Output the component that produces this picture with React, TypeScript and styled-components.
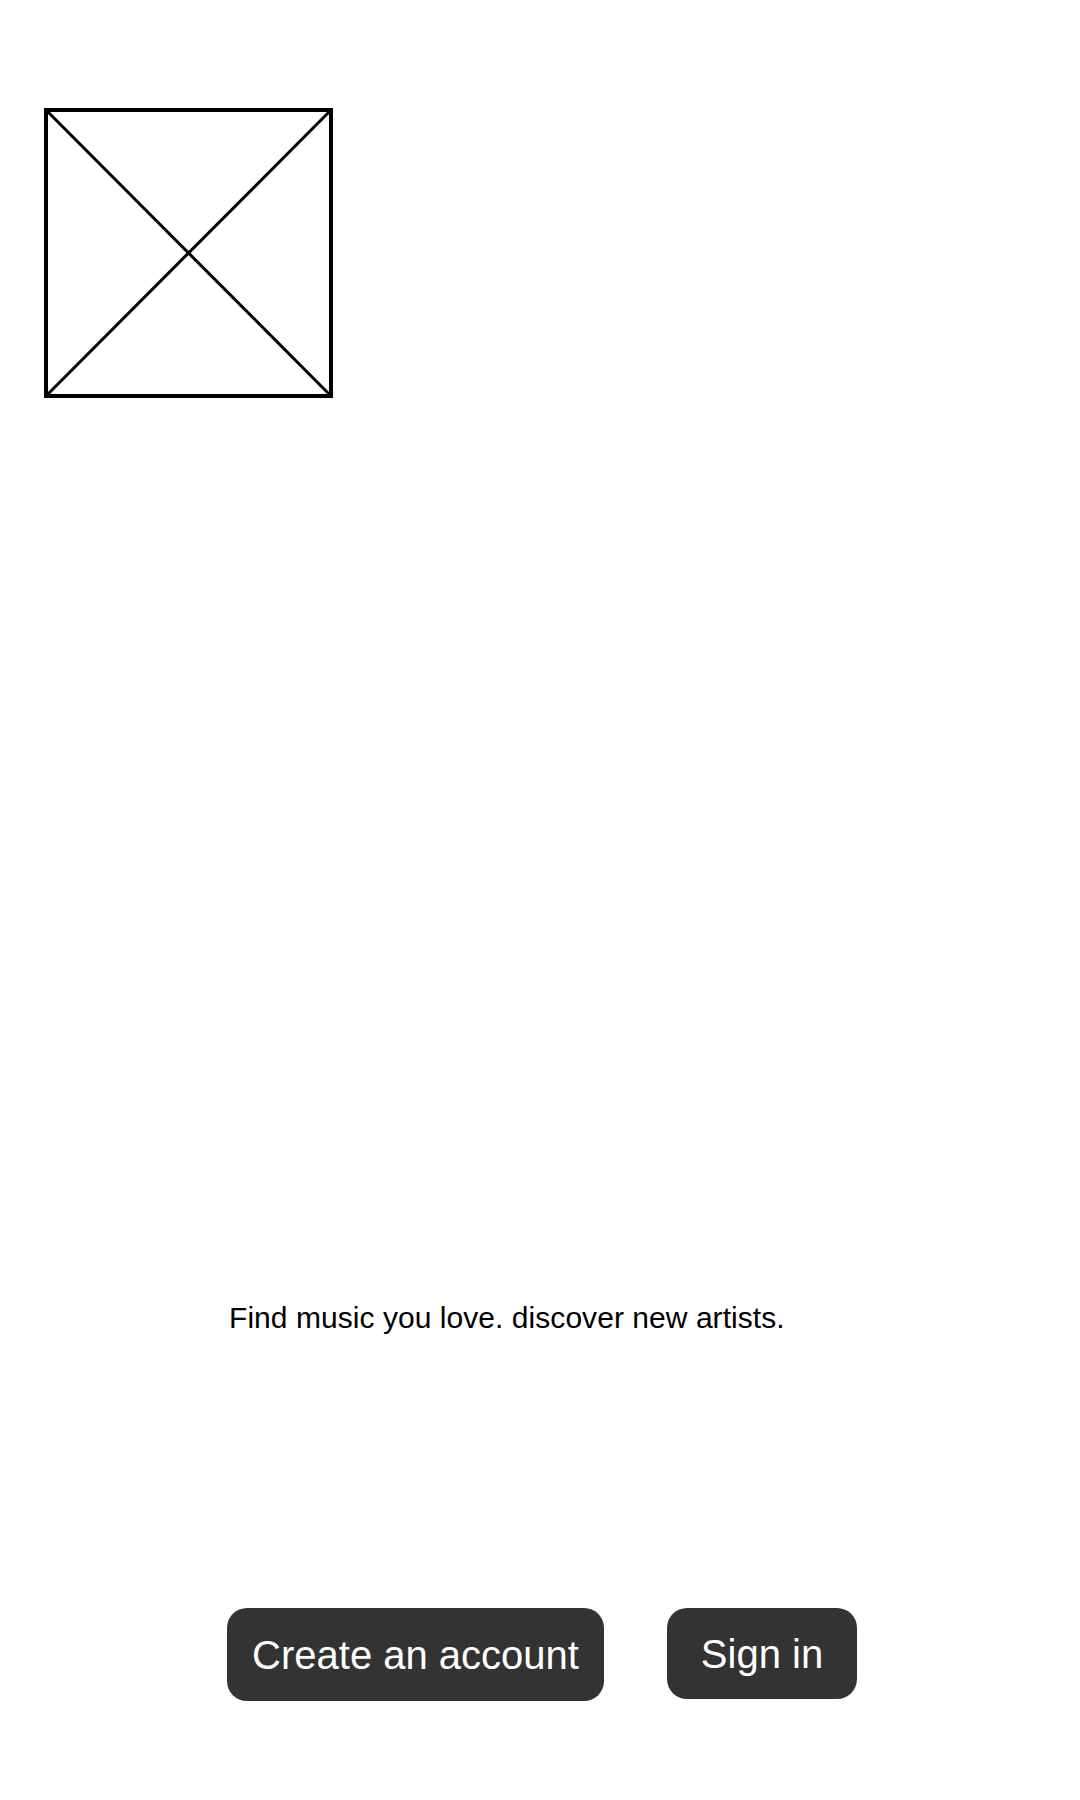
import React from "react";
import styled, { createGlobalStyle } from "styled-components";

const GlobalStyle = createGlobalStyle`
  html, body {
    margin: 0;
    padding: 0;
    background: #ffffff;
  }
  body {
    font-family: "Liberation Sans", Arial, sans-serif;
    color: #000000;
  }
`;

const Page = styled.main`
  display: flex;
  flex-direction: column;
  min-height: 1800px;
  box-sizing: border-box;
  padding-top: 108px;
`;

const LogoSlot = styled.div`
  padding-left: 44px;
  display: flex;
`;

const Content = styled.section`
  display: flex;
  flex-direction: column;
  padding-left: 227px;
  margin-top: 903px;
`;

const Tagline = styled.p`
  margin: 0 0 0 2px;
  font-size: 30px;
  line-height: 34px;
  letter-spacing: 0.05px;
  color: #000;
`;

const Actions = styled.div`
  display: flex;
  align-items: flex-start;
  gap: 63px;
  margin-top: 273px;
`;

const ActionButton = styled.button<{ $w: number; $h: number }>`
  display: flex;
  align-items: center;
  justify-content: center;
  width: ${(p) => p.$w}px;
  height: ${(p) => p.$h}px;
  padding: 0;
  border: none;
  border-radius: 20px;
  background: #333333;
  color: #ffffff;
  font-family: "Liberation Sans", Arial, sans-serif;
  font-size: 40px;
  line-height: 1;
  cursor: pointer;
`;

const PlaceholderLogo = () => (
  <svg width="289" height="290" viewBox="0 0 289 290" aria-label="logo">
    <line x1="3" y1="3" x2="286" y2="287" stroke="#000" strokeWidth="3" />
    <line x1="286" y1="3" x2="3" y2="287" stroke="#000" strokeWidth="3" />
    <rect x="2" y="2" width="285" height="286" fill="none" stroke="#000" strokeWidth="4" />
  </svg>
);

export default function App() {
  return (
    <>
      <GlobalStyle />
      <Page>
        <LogoSlot>
          <PlaceholderLogo />
        </LogoSlot>
        <Content>
          <Tagline>Find music you love. discover new artists.</Tagline>
          <Actions>
            <ActionButton $w={377} $h={93}>Create an account</ActionButton>
            <ActionButton $w={190} $h={91}>Sign in</ActionButton>
          </Actions>
        </Content>
      </Page>
    </>
  );
}
